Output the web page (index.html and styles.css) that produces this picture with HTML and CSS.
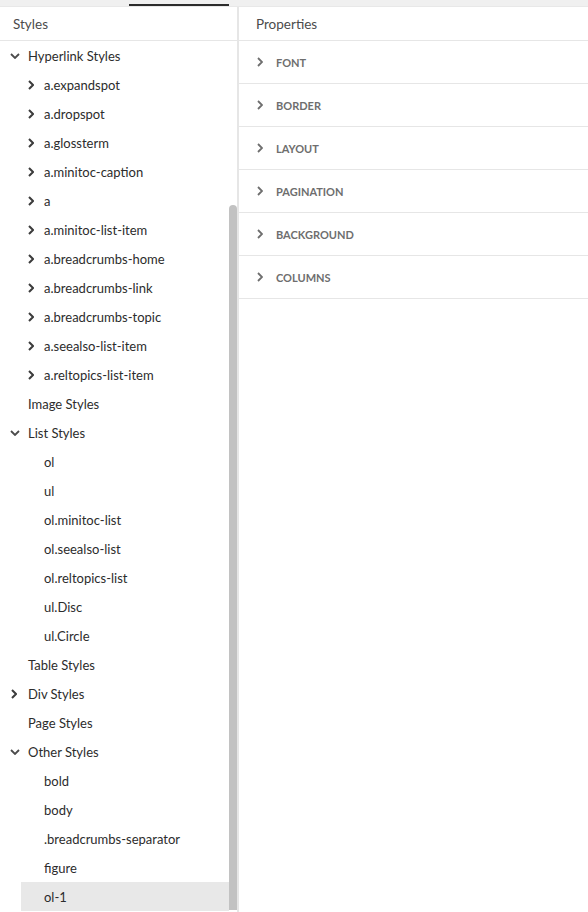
FILE: index.html
```html
<!DOCTYPE html>
<html>
<head>
<meta charset="utf-8">
<link rel="stylesheet" href="styles.css">
</head>
<body>
<div class="topbar"><div class="tab-indicator"></div></div>
<div class="panels">
  <section class="styles-panel">
    <div class="panel-header">Styles</div>
    <ul class="tree">
      <li class="row l1"><span class="chev down"><svg width="10" height="6" viewBox="0 0 10 6"><path d="M1 1 L5 5 L9 1" fill="none" stroke="#4b4b4b" stroke-width="1.8"/></svg></span>Hyperlink Styles</li>
      <li class="row l2"><span class="chev"><svg width="6" height="10" viewBox="0 0 6 10"><path d="M1 1 L5 5 L1 9" fill="none" stroke="#3c3c3c" stroke-width="2"/></svg></span>a.expandspot</li>
      <li class="row l2"><span class="chev"><svg width="6" height="10" viewBox="0 0 6 10"><path d="M1 1 L5 5 L1 9" fill="none" stroke="#3c3c3c" stroke-width="2"/></svg></span>a.dropspot</li>
      <li class="row l2"><span class="chev"><svg width="6" height="10" viewBox="0 0 6 10"><path d="M1 1 L5 5 L1 9" fill="none" stroke="#3c3c3c" stroke-width="2"/></svg></span>a.glossterm</li>
      <li class="row l2"><span class="chev"><svg width="6" height="10" viewBox="0 0 6 10"><path d="M1 1 L5 5 L1 9" fill="none" stroke="#3c3c3c" stroke-width="2"/></svg></span>a.minitoc-caption</li>
      <li class="row l2"><span class="chev"><svg width="6" height="10" viewBox="0 0 6 10"><path d="M1 1 L5 5 L1 9" fill="none" stroke="#3c3c3c" stroke-width="2"/></svg></span>a</li>
      <li class="row l2"><span class="chev"><svg width="6" height="10" viewBox="0 0 6 10"><path d="M1 1 L5 5 L1 9" fill="none" stroke="#3c3c3c" stroke-width="2"/></svg></span>a.minitoc-list-item</li>
      <li class="row l2"><span class="chev"><svg width="6" height="10" viewBox="0 0 6 10"><path d="M1 1 L5 5 L1 9" fill="none" stroke="#3c3c3c" stroke-width="2"/></svg></span>a.breadcrumbs-home</li>
      <li class="row l2"><span class="chev"><svg width="6" height="10" viewBox="0 0 6 10"><path d="M1 1 L5 5 L1 9" fill="none" stroke="#3c3c3c" stroke-width="2"/></svg></span>a.breadcrumbs-link</li>
      <li class="row l2"><span class="chev"><svg width="6" height="10" viewBox="0 0 6 10"><path d="M1 1 L5 5 L1 9" fill="none" stroke="#3c3c3c" stroke-width="2"/></svg></span>a.breadcrumbs-topic</li>
      <li class="row l2"><span class="chev"><svg width="6" height="10" viewBox="0 0 6 10"><path d="M1 1 L5 5 L1 9" fill="none" stroke="#3c3c3c" stroke-width="2"/></svg></span>a.seealso-list-item</li>
      <li class="row l2"><span class="chev"><svg width="6" height="10" viewBox="0 0 6 10"><path d="M1 1 L5 5 L1 9" fill="none" stroke="#3c3c3c" stroke-width="2"/></svg></span>a.reltopics-list-item</li>
      <li class="row l1"><span class="chev"></span>Image Styles</li>
      <li class="row l1"><span class="chev down"><svg width="10" height="6" viewBox="0 0 10 6"><path d="M1 1 L5 5 L9 1" fill="none" stroke="#4b4b4b" stroke-width="1.8"/></svg></span>List Styles</li>
      <li class="row l2"><span class="chev"></span>ol</li>
      <li class="row l2"><span class="chev"></span>ul</li>
      <li class="row l2"><span class="chev"></span>ol.minitoc-list</li>
      <li class="row l2"><span class="chev"></span>ol.seealso-list</li>
      <li class="row l2"><span class="chev"></span>ol.reltopics-list</li>
      <li class="row l2"><span class="chev"></span>ul.Disc</li>
      <li class="row l2"><span class="chev"></span>ul.Circle</li>
      <li class="row l1"><span class="chev"></span>Table Styles</li>
      <li class="row l1"><span class="chev right"><svg width="6" height="10" viewBox="0 0 6 10"><path d="M1 1 L5 5 L1 9" fill="none" stroke="#3c3c3c" stroke-width="2"/></svg></span>Div Styles</li>
      <li class="row l1"><span class="chev"></span>Page Styles</li>
      <li class="row l1"><span class="chev down"><svg width="10" height="6" viewBox="0 0 10 6"><path d="M1 1 L5 5 L9 1" fill="none" stroke="#4b4b4b" stroke-width="1.8"/></svg></span>Other Styles</li>
      <li class="row l2"><span class="chev"></span>bold</li>
      <li class="row l2"><span class="chev"></span>body</li>
      <li class="row l2"><span class="chev"></span>.breadcrumbs-separator</li>
      <li class="row l2"><span class="chev"></span>figure</li>
      <li class="row l2 selected"><span class="chev"></span>ol-1</li>
    </ul>
    <div class="scroll-thumb"></div>
  </section>
  <section class="props-panel">
    <div class="panel-header props-header">Properties</div>
    <ul class="props">
      <li class="prop"><svg width="6" height="10" viewBox="0 0 6 10"><path d="M1 1 L5 5 L1 9" fill="none" stroke="#6e6e6e" stroke-width="1.8"/></svg><span>FONT</span></li>
      <li class="prop"><svg width="6" height="10" viewBox="0 0 6 10"><path d="M1 1 L5 5 L1 9" fill="none" stroke="#6e6e6e" stroke-width="1.8"/></svg><span>BORDER</span></li>
      <li class="prop"><svg width="6" height="10" viewBox="0 0 6 10"><path d="M1 1 L5 5 L1 9" fill="none" stroke="#6e6e6e" stroke-width="1.8"/></svg><span>LAYOUT</span></li>
      <li class="prop"><svg width="6" height="10" viewBox="0 0 6 10"><path d="M1 1 L5 5 L1 9" fill="none" stroke="#6e6e6e" stroke-width="1.8"/></svg><span>PAGINATION</span></li>
      <li class="prop"><svg width="6" height="10" viewBox="0 0 6 10"><path d="M1 1 L5 5 L1 9" fill="none" stroke="#6e6e6e" stroke-width="1.8"/></svg><span>BACKGROUND</span></li>
      <li class="prop"><svg width="6" height="10" viewBox="0 0 6 10"><path d="M1 1 L5 5 L1 9" fill="none" stroke="#6e6e6e" stroke-width="1.8"/></svg><span>COLUMNS</span></li>
    </ul>
  </section>
</div>
</body>
</html>
```

FILE: styles.css
```css
* { box-sizing: border-box; }
html, body { margin: 0; padding: 0; }
body {
  width: 588px;
  height: 912px;
  overflow: hidden;
  background: #ffffff;
  font-family: Lato, "Open Sans", sans-serif;
  font-size: 13px;
  color: #2c2c2c;
}
.topbar {
  height: 7px;
  background: #f0f0f0;
  border-bottom: 1px solid #e8e8e8;
  position: relative;
}
.tab-indicator {
  position: absolute;
  left: 129px;
  top: 4px;
  width: 100px;
  height: 2px;
  background: #2c2c2c;
}
.panels {
  display: flex;
  height: 905px;
}
.styles-panel {
  width: 239px;
  flex: none;
  border-right: 2px solid #e6e6e6;
  position: relative;
  overflow: hidden;
}
.props-panel {
  flex: 1;
}
.panel-header {
  height: 34px;
  border-bottom: 1px solid #e6e6e6;
  display: flex;
  align-items: center;
  padding-left: 13px;
  color: #4b4b4b;
  font-size: 13.5px;
}
.props-header { padding-left: 17px; }
.tree {
  list-style: none;
  margin: 0;
  padding: 0;
}
.row {
  height: 29px;
  display: flex;
  align-items: center;
  white-space: nowrap;
}
.row.l1 { padding-left: 8px; }
.row.l2 { padding-left: 24px; }
.chev {
  width: 20px;
  flex: none;
  display: flex;
  align-items: center;
  padding-left: 2px;
}
.chev svg { display: block; }
.row.l2 .chev { padding-left: 4px; }
.row.l1 .chev.right { padding-left: 3px; }
.row.selected {
  background: #e8e8e8;
  margin-left: 21px;
  padding-left: 3px;
  margin-right: 8px;
}
.scroll-thumb {
  position: absolute;
  left: 229px;
  top: 198px;
  width: 8px;
  height: 705px;
  background: #c2c2c2;
  border-radius: 4px 4px 0 0;
}
.props {
  list-style: none;
  margin: 0;
  padding: 0;
}
.prop {
  height: 43px;
  border-bottom: 1px solid #e6e6e6;
  display: flex;
  align-items: center;
  padding-left: 18px;
  gap: 13px;
}
.prop svg { display: block; flex: none; }
.prop span {
  font-size: 11px;
  font-weight: 700;
  color: #6e6e6e;
  letter-spacing: 0;
}
```
